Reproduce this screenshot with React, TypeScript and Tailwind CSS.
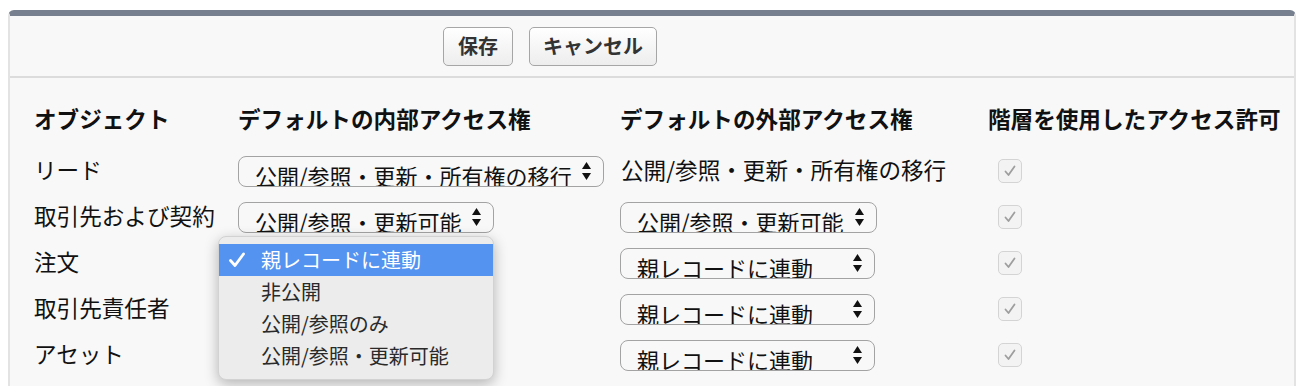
import React from "react";

const font = { fontFamily: '"Noto Sans CJK JP", "Noto Sans", sans-serif' };

function Arrows() {
  return (
    <svg width="9" height="18" viewBox="0 0 9 18" className="shrink-0">
      <polygon points="0,7 4.5,0 9,7" fill="#111" />
      <polygon points="0,11 4.5,18 9,11" fill="#111" />
    </svg>
  );
}

function Select({ text, w }: { text: string; w: string }) {
  return (
    <div
      className={`${w} h-[31px] rounded-[8px] border-[1.5px] border-[#a3a3a3] bg-[#f8f8f8] overflow-hidden flex items-start justify-between pl-[16px] pr-[12px]`}
    >
      <span className="pt-[7px] text-[22px] leading-[22px] text-[#111] whitespace-nowrap">{text}</span>
      <span className="self-center flex">
        <Arrows />
      </span>
    </div>
  );
}

function Check() {
  return (
    <div className="ml-[10px] w-[24px] h-[24px] rounded-[5px] border border-[#d4d4d4] bg-[#f3f3f3] flex items-center justify-center">
      <svg width="16" height="16" viewBox="0 0 16 16">
        <path d="M3.5 8.5 L6.5 12 L12.5 3.5" fill="none" stroke="#9e9e9e" strokeWidth="1.8" strokeLinecap="round" strokeLinejoin="round" />
      </svg>
    </div>
  );
}

const row = "grid grid-cols-[204px_382px_368px_1fr] h-[46px] items-center text-[22.6px] leading-[22px] text-[#111]";

export default function App() {
  const rows: { label: string; a: React.ReactNode; b: React.ReactNode }[] = [
    {
      label: "リード",
      a: <Select text="公開/参照・更新・所有権の移行" w="w-[366px]" />,
      b: <span className="pl-[1px] pb-[2px] block">公開/参照・更新・所有権の移行</span>,
    },
    {
      label: "取引先および契約",
      a: <Select text="公開/参照・更新可能" w="w-[256px]" />,
      b: <Select text="公開/参照・更新可能" w="w-[257px]" />,
    },
    {
      label: "注文",
      a: <Select text="親レコードに連動" w="w-[256px]" />,
      b: <Select text="親レコードに連動" w="w-[255px]" />,
    },
    {
      label: "取引先責任者",
      a: <Select text="親レコードに連動" w="w-[256px]" />,
      b: <Select text="親レコードに連動" w="w-[255px]" />,
    },
    {
      label: "アセット",
      a: <Select text="親レコードに連動" w="w-[256px]" />,
      b: <Select text="親レコードに連動" w="w-[255px]" />,
    },
    {
      label: "商談",
      a: <Select text="非公開" w="w-[252px]" />,
      b: <Select text="非公開" w="w-[255px]" />,
    },
  ];

  const menuItems = ["親レコードに連動", "非公開", "公開/参照のみ", "公開/参照・更新可能"];

  return (
    <div className="relative w-[1300px] h-[386px] overflow-hidden bg-white pt-[10px] pl-[8px] pr-[4px]" style={font}>
      <div className="rounded-t-[6px] border-t-[6px] border-t-[#76808f] border-x-2 border-x-[#e3e3e3] bg-[#f8f8f8] h-[420px]">
        <div className="h-[60px] flex items-center pl-[433px] gap-[16px]">
          <button className="h-[39px] px-[14px] rounded-[5px] border-[1.5px] border-[#a6a6a6] bg-gradient-to-b from-white to-[#ededed] text-[20px] font-bold text-[#333]">
            保存
          </button>
          <button className="h-[39px] px-[13px] rounded-[5px] border-[1.5px] border-[#a6a6a6] bg-gradient-to-b from-white to-[#ededed] text-[20px] font-bold text-[#333]">
            キャンセル
          </button>
        </div>
        <div className="h-[2px] bg-[#dcdcdc]" />
        <div className="pt-[19px] pl-[24px]">
          <div className={`${row} font-bold mb-[5px] pb-[2px]`}>
            <div className="whitespace-nowrap">オブジェクト</div>
            <div className="whitespace-nowrap">デフォルトの内部アクセス権</div>
            <div className="whitespace-nowrap">デフォルトの外部アクセス権</div>
            <div className="whitespace-nowrap">階層を使用したアクセス許可</div>
          </div>
          {rows.map((r) => (
            <div key={r.label} className={row}>
              <div className="pb-[2px]">{r.label}</div>
              <div>{r.a}</div>
              <div>{r.b}</div>
              <div>
                <Check />
              </div>
            </div>
          ))}
        </div>
      </div>

      <div className="absolute left-[218px] top-[236px] w-[276px] h-[144px] rounded-[8px] bg-[#ececec] border border-[#d2d2d2] shadow-[0_4px_14px_rgba(0,0,0,0.28)] pt-[7px]">
        {menuItems.map((m, i) => (
          <div
            key={m}
            className={`relative h-[32px] flex items-center pl-[42px] text-[20px] leading-[20px] ${
              i === 0 ? "bg-[#5493f0] text-white" : "text-[#2a2a2a]"
            }`}
          >
            {i === 0 && (
              <svg width="16" height="16" viewBox="0 0 16 16" className="absolute left-[10px] top-[8px]">
                <path d="M1.5 8.5 L6 13.5 L14.5 2" fill="none" stroke="white" strokeWidth="2.8" strokeLinecap="round" strokeLinejoin="round" />
              </svg>
            )}
            {m}
          </div>
        ))}
      </div>
    </div>
  );
}
